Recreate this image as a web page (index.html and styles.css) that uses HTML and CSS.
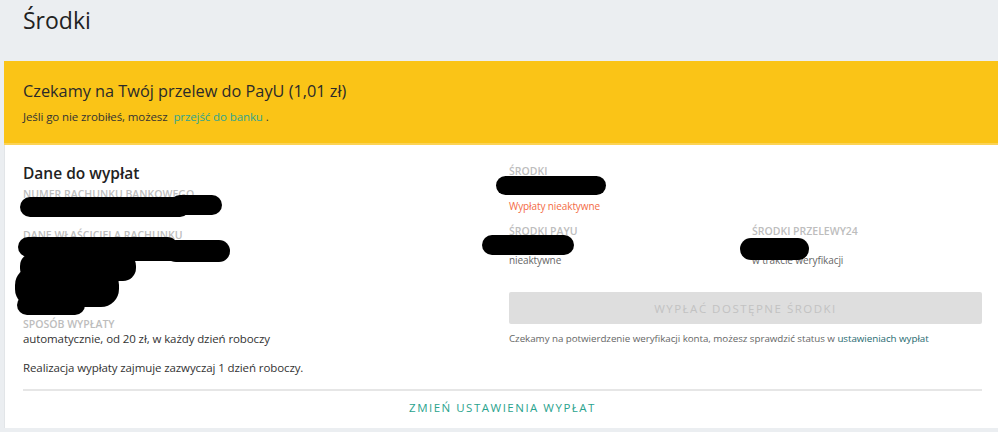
FILE: index.html
```html
<!DOCTYPE html>
<html lang="pl">
<head>
    <meta charset="UTF-8">
    <title>Środki</title>
    <link rel="stylesheet" href="styles.css">
</head>
<body>

<h1 class="page-title">Środki</h1>

<div class="card">
    <div class="banner">
        <h2>Czekamy na Twój przelew do PayU (1,01 zł)</h2>
        <p>Jeśli go nie zrobiłeś, możesz <a href="#">przejść do banku</a> .</p>
    </div>

    <div class="card-body">
        <div class="cols">
            <div class="col-left">
                <h3>Dane do wypłat</h3>

                <div class="field">
                    <div class="label">Numer rachunku bankowego</div>
                    <div class="hidden-value account">
                        <!-- redaction marks -->
                        <svg class="scribble" width="210" height="24" viewBox="0 0 210 24">
                            <rect x="0" y="2" width="170" height="20" rx="10"/>
                            <rect x="150" y="0" width="52" height="20" rx="10"/>
                        </svg>
                    </div>
                </div>

                <div class="field">
                    <div class="label">Dane właściciela rachunku</div>
                    <div class="hidden-value owner">
                        <svg class="scribble" width="220" height="80" viewBox="0 0 220 80">
                            <rect x="3" y="0" width="160" height="20" rx="10"/>
                            <rect x="150" y="3" width="65" height="22" rx="11"/>
                            <rect x="90" y="10" width="100" height="14" rx="7"/>
                            <rect x="5" y="16" width="116" height="28" rx="13"/>
                            <rect x="0" y="30" width="104" height="40" rx="18"/>
                            <rect x="2" y="58" width="68" height="20" rx="10"/>
                        </svg>
                    </div>
                </div>

                <div class="field">
                    <div class="label">Sposób wypłaty</div>
                    <div class="value">automatycznie, od 20 zł, w każdy dzień roboczy</div>
                </div>

                <p class="info">Realizacja wypłaty zajmuje zazwyczaj 1 dzień roboczy.</p>
            </div>

            <div class="col-right">
                <div class="field">
                    <div class="label">Środki</div>
                    <div class="hidden-value balance">
                        <svg class="scribble" width="112" height="20" viewBox="0 0 112 20">
                            <rect x="0" y="0" width="110" height="19" rx="9.5"/>
                        </svg>
                    </div>
                    <div class="status-warning">Wypłaty nieaktywne</div>
                </div>

                <div class="sub-cols">
                    <div class="field">
                        <div class="label">Środki PayU</div>
                        <div class="hidden-value small">
                            <svg class="scribble payu" width="94" height="22" viewBox="0 0 94 22">
                                <rect x="0" y="0" width="92" height="20" rx="10"/>
                            </svg>
                        </div>
                        <div class="status">nieaktywne</div>
                    </div>
                    <div class="field">
                        <div class="label">Środki Przelewy24</div>
                        <div class="hidden-value small">
                            <svg class="scribble p24" width="70" height="24" viewBox="0 0 70 24">
                                <rect x="0" y="0" width="69" height="22" rx="11"/>
                            </svg>
                        </div>
                        <div class="status">w trakcie weryfikacji</div>
                    </div>
                </div>

                <button class="btn-payout" disabled>Wypłać dostępne środki</button>
                <p class="note">Czekamy na potwierdzenie weryfikacji konta, możesz sprawdzić status w <a href="#">ustawieniach wypłat</a></p>
            </div>
        </div>

        <div class="card-footer">
            <a href="#">Zmień ustawienia wypłat</a>
        </div>
    </div>
</div>

</body>
</html>
```

FILE: styles.css
```css
body {
    margin: 0;
    font-family: "Open Sans", Arial, sans-serif;
    background-color: #ebeef1;
    color: #333;
    overflow: hidden;
}
.page-title {
    margin: 0;
    height: 61px;
    padding: 3px 23px 0;
    box-sizing: border-box;
    font-size: 23px;
    font-weight: 400;
    color: #222;
    line-height: 34px;
}
.card {
    margin-left: 4px;
}
.banner {
    background-color: #fac417;
    border-bottom: 2px solid #fcd355;
    padding: 18px 19px 17px;
}
.banner h2 {
    margin: 0 0 5px;
    font-size: 16.3px;
    font-weight: 500;
    line-height: 24px;
    color: #2a2a2a;
}
.banner p {
    margin: 0;
    font-size: 11.5px;
    letter-spacing: -0.1px;
    line-height: 18px;
    color: #333;
}
.banner a {
    color: #2fa590;
    text-decoration: none;
    margin-left: 3px;
}
.card-body {
    background-color: #fff;
    border-left: 1px solid #e2e5e8;
    padding: 16px 16px 0 18px;
}
.cols {
    display: grid;
    grid-template-columns: 486px 1fr;
}
.col-left h3 {
    margin: 0 0 2px;
    font-size: 15.5px;
    font-weight: 600;
    line-height: 24px;
    color: #222;
}
.field {
    display: flex;
    flex-direction: column;
}
.label {
    font-size: 10.5px;
    font-weight: 600;
    line-height: 14px;
    text-transform: uppercase;
    color: #bdbdbd;
}
.value {
    font-size: 11.5px;
    letter-spacing: -0.1px;
    line-height: 16px;
    color: #333;
}
.hidden-value {
    position: relative;
}
.scribble {
    position: absolute;
    fill: #000;
}
.hidden-value.account {
    height: 27px;
}
.hidden-value.account .scribble {
    left: -3px;
    top: -6px;
}
.hidden-value.owner {
    height: 75px;
}
.hidden-value.owner .scribble {
    left: -8px;
    top: -5px;
}
.info {
    margin: 13px 0 0;
    font-size: 11.5px;
    letter-spacing: -0.1px;
    line-height: 16px;
}
.col-right > .field > .label {
    margin-top: 3px;
}
.hidden-value.balance {
    height: 21px;
}
.hidden-value.balance .scribble {
    left: -13px;
    top: -2px;
}
.status-warning {
    font-size: 10px;
    letter-spacing: -0.1px;
    line-height: 14px;
    color: #f36b45;
}
.sub-cols {
    display: grid;
    grid-template-columns: 243px 1fr;
    margin-top: 11px;
}
.hidden-value.small {
    height: 15px;
}
.scribble.payu {
    left: -27px;
    top: -3px;
}
.scribble.p24 {
    left: -12px;
    top: 0;
}
.status {
    font-size: 10px;
    letter-spacing: -0.1px;
    line-height: 14px;
    color: #666;
}
.btn-payout {
    display: block;
    width: 100%;
    height: 32px;
    margin-top: 25px;
    border: none;
    border-radius: 2px;
    background-color: #dedede;
    color: #c2c2c2;
    font-family: inherit;
    font-size: 11.5px;
    letter-spacing: 1.5px;
    text-transform: uppercase;
}
.note {
    margin: 7px 0 0;
    font-size: 9.8px;
    letter-spacing: -0.05px;
    line-height: 16px;
    color: #666;
}
.note a {
    color: #1f6a70;
    text-decoration: none;
}
.card-footer {
    margin-top: 13px;
    border-top: 2px solid #e6e6e6;
    text-align: center;
    padding: 4px 0 11px;
}
.card-footer a {
    font-size: 11.5px;
    line-height: 18px;
    letter-spacing: 1.5px;
    text-transform: uppercase;
    color: #2aa38e;
    text-decoration: none;
}
```
